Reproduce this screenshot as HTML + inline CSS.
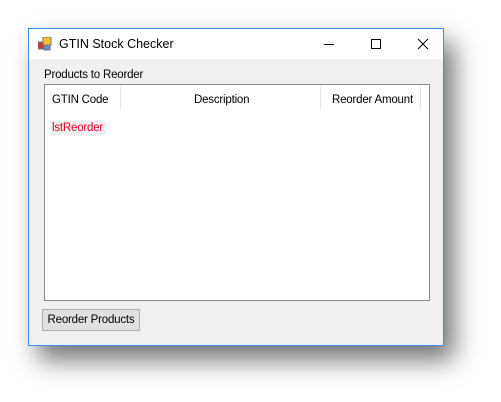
<!DOCTYPE html><html><head><style>
body{margin:0;width:501px;height:402px;background:#fff;position:relative;overflow:hidden;font-family:"Liberation Sans",sans-serif;font-size:11.5px;letter-spacing:-0.2px;color:#000}
.win{position:absolute;left:28px;top:28px;width:414px;height:316px;border:1px solid #3c8ff0;background:#f0f0f0;box-shadow:10px 14px 24px rgba(0,0,0,.55)}
.tb{position:absolute;left:0;top:0;width:414px;height:30px;background:#fff}
.t{position:absolute;left:30px;top:8px;font-size:12.5px;letter-spacing:0}
.a{position:absolute}
.lv{position:absolute;left:15px;top:55px;width:384px;height:215px;border:1px solid #828790;background:#fff}
.h{position:absolute;top:9px}
.sep{position:absolute;top:1px;width:1px;height:24px;background:#e5e5e5}
.btn{position:absolute;left:13px;top:280px;width:96px;height:20px;border:1px solid #adadad;background:#e1e1e1;text-align:center;line-height:20px}
</style></head><body>
<div class="win">
<div class="tb">
<svg class="a" style="left:9px;top:8px" width="14" height="14"><rect x="0" y="5" width="6" height="7" fill="#c33" stroke="#777"/><rect x="5" y="0" width="8" height="8" fill="#f5c12e" stroke="#777"/><rect x="6" y="8" width="6" height="5" fill="#5b8fd6" stroke="#777"/></svg>
<div class="t">GTIN Stock Checker</div>
<svg class="a" style="left:292px;top:8px" width="120" height="14"><line x1="3" y1="7.5" x2="13" y2="7.5" stroke="#000"/><rect x="50.5" y="2.5" width="9" height="9" fill="none" stroke="#000"/><path d="M97 2L107 12M107 2L97 12" stroke="#000"/></svg>
</div>
<div class="a" style="left:15px;top:40px">Products to Reorder</div>
<div class="lv">
<div class="h" style="left:7px">GTIN Code</div>
<div class="sep" style="left:75px"></div>
<div class="h" style="left:149px">Description</div>
<div class="sep" style="left:275px"></div>
<div class="h" style="left:287px">Reorder Amount</div>
<div class="sep" style="left:375px"></div>
<div class="a" style="left:5px;top:36px;background:#f0f0f0;color:#e8002a;padding:1px 3px 1px 2px">lstReorder</div>
</div>
<div class="btn">Reorder Products</div>
</div>
</body></html>
